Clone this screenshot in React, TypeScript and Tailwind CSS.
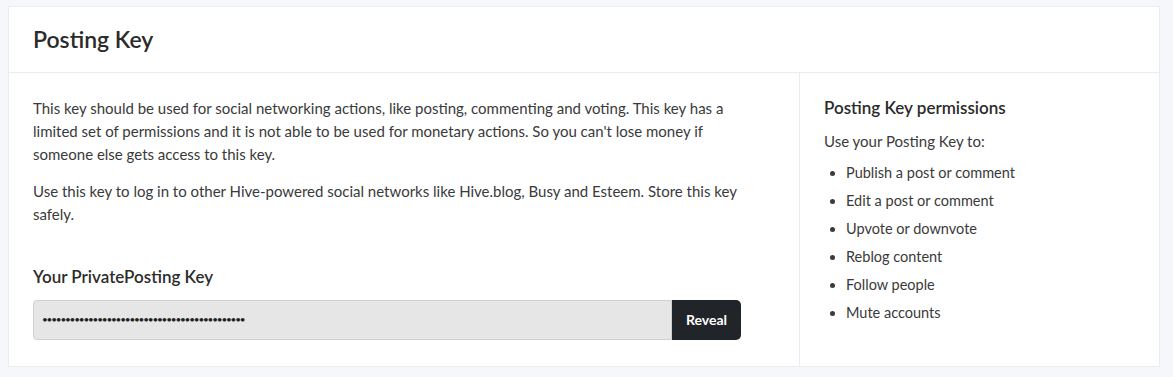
export default function App() {
  const perms = [
    "Publish a post or comment",
    "Edit a post or comment",
    "Upvote or downvote",
    "Reblog content",
    "Follow people",
    "Mute accounts",
  ]

  return (
    <div
      className="min-h-[377px] bg-[#f5f7fb] pt-[6px] pl-[8px] pr-[13px] pb-[10px] text-[#3a3a3a]"
      style={{ fontFamily: "Lato, 'Noto Sans', sans-serif" }}
    >
      <div className="bg-white border border-[#e9ecf1]">
        <div className="h-[66px] flex items-center px-6 border-b border-[#e9ecf1]">
          <h1 className="text-[23px] font-semibold text-[#2b2b2b]">Posting Key</h1>
        </div>
        <div className="flex">
          <div className="w-[790px] px-6 pt-[24px] pb-[26px]">
            <div className="max-w-[712px]">
              <p className="text-[15px] leading-[23px] mb-[14px]">
                This key should be used for social networking actions, like posting, commenting and voting. This key has a
                limited set of permissions and it is not able to be used for monetary actions. So you can't lose money if
                someone else gets access to this key.
              </p>
              <p className="text-[15px] leading-[23px]">
                Use this key to log in to other Hive-powered social networks like Hive.blog, Busy and Esteem. Store this key
                safely.
              </p>
            </div>
            <h3 className="mt-[38px] mb-[10px] text-[17px] font-semibold text-[#2b2b2b]">Your PrivatePosting Key</h3>
            <div className="flex w-[708px] h-[40px]">
              <div className="flex-1 flex items-center bg-[#e6e6e6] border border-[#cfcfcf] rounded-l-[4px] px-2 text-[10px] tracking-[-1.2px] text-[#222] overflow-hidden">
                ••••••••••••••••••••••••••••••••••••••••••••
              </div>
              <button className="w-[69px] bg-[#212529] text-white text-[14px] font-bold rounded-r-[5px]">
                Reveal
              </button>
            </div>
          </div>
          <div className="flex-1 border-l border-[#e9ecf1] px-6 pt-[22px]">
            <h3 className="text-[17px] font-semibold text-[#2b2b2b]">Posting Key permissions</h3>
            <p className="mt-[9px] text-[15px]">Use your Posting Key to:</p>
            <ul className="mt-[7px] pl-[22px] list-disc text-[14.5px]">
              {perms.map((p) => (
                <li key={p} className="h-[28px] leading-[28px]">
                  {p}
                </li>
              ))}
            </ul>
          </div>
        </div>
      </div>
    </div>
  )
}
